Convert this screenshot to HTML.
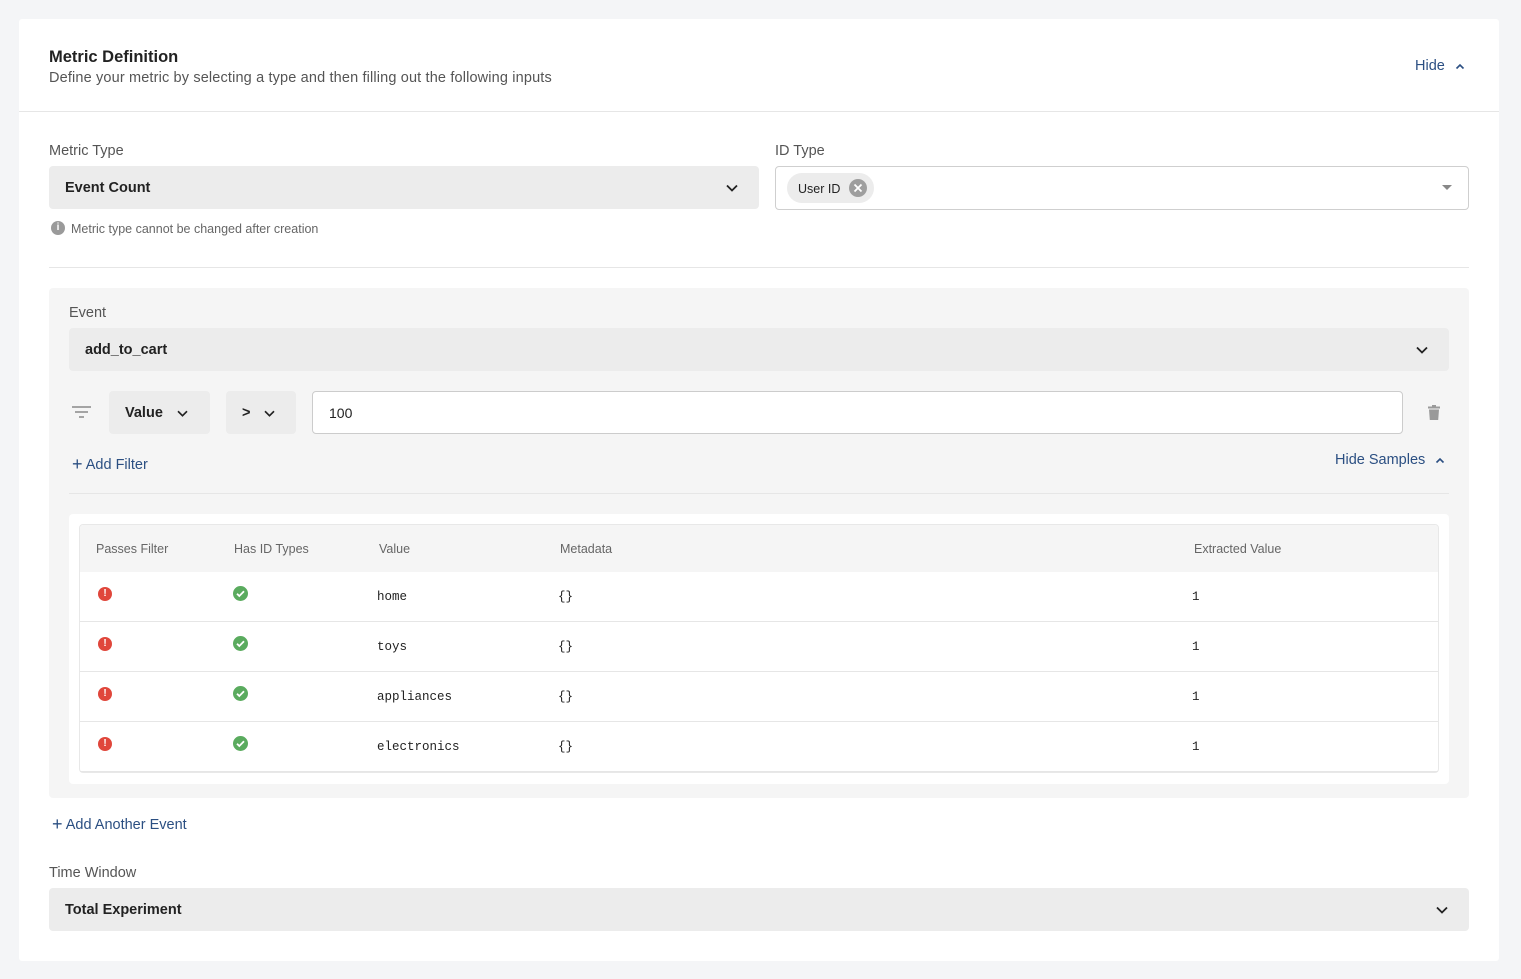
<!DOCTYPE html>
<html><head><style>
*{box-sizing:border-box;margin:0;padding:0}
body{width:1521px;height:979px;background:#f4f5f7;font-family:"Liberation Sans",sans-serif;color:#222;position:relative;overflow:hidden}
.a{position:absolute}
.card{left:19px;top:19px;width:1480px;height:942px;background:#fff;border-radius:3px}
.sel{background:#ececec;border-radius:4px;font-weight:bold;font-size:14.5px;display:flex;align-items:center;padding-left:16px;padding-top:1px}
.lbl{font-size:14.5px;color:#555}
.blue{color:#2b4f82;font-size:14.5px}
.chev{position:absolute;right:20px;top:50%;margin-top:-5px}
.th{font-size:12.5px;color:#666;top:542px}
.mono{font-family:"Liberation Mono",monospace;font-size:12.5px;color:#222}
.hr{height:1px;background:#e6e6e6}
</style></head><body>
<div class="a card"></div>
<div class="a" style="left:49px;top:48px;font-size:16.5px;font-weight:bold">Metric Definition</div>
<div class="a" style="left:49px;top:70px;font-size:14.5px;color:#555;letter-spacing:.15px">Define your metric by selecting a type and then filling out the following inputs</div>
<div class="a blue" style="left:1415px;top:58px">Hide <svg width="10" height="7" style="margin-left:6px" viewBox="0 0 10 7"><path d="M1.5 5.5L5 2l3.5 3.5" stroke="#2b4f82" stroke-width="1.6" fill="none"/></svg></div>
<div class="a hr" style="left:19px;top:111px;width:1480px"></div>

<div class="a lbl" style="left:49px;top:143px">Metric Type</div>
<div class="a sel" style="left:49px;top:166px;width:710px;height:43px">Event Count<svg class="chev" width="14" height="10" viewBox="0 0 14 10"><path d="M2 2.5l5 5 5-5" stroke="#222" stroke-width="1.8" fill="none"/></svg></div>
<div class="a" style="left:51px;top:221px;width:14px;height:14px;border-radius:50%;background:#9a9a9a;color:#fff;font-size:10px;font-weight:bold;text-align:center;line-height:14px">i</div>
<div class="a" style="left:71px;top:222px;font-size:12.5px;color:#666">Metric type cannot be changed after creation</div>

<div class="a lbl" style="left:775px;top:143px">ID Type</div>
<div class="a" style="left:775px;top:166px;width:694px;height:44px;border:1px solid #cfcfcf;border-radius:4px;background:#fff"></div>
<div class="a" style="left:787px;top:173px;width:87px;height:30px;border-radius:15px;background:#ececec;font-size:12.5px;padding:9px 0 0 11px">User ID</div>
<div class="a" style="left:849px;top:179px;width:18px;height:18px;border-radius:50%;background:#9e9e9e"><svg width="18" height="18" viewBox="0 0 18 18"><path d="M5.5 5.5l7 7M12.5 5.5l-7 7" stroke="#fff" stroke-width="1.8"/></svg></div>
<svg class="a" style="left:1442px;top:185px" width="10" height="6" viewBox="0 0 10 6"><path d="M0 0h10L5 5z" fill="#888"/></svg>

<div class="a hr" style="left:49px;top:267px;width:1420px"></div>

<div class="a" style="left:49px;top:288px;width:1420px;height:510px;background:#f5f5f5;border-radius:4px"></div>
<div class="a lbl" style="left:69px;top:305px">Event</div>
<div class="a sel" style="left:69px;top:328px;width:1380px;height:43px">add_to_cart<svg class="chev" width="14" height="10" viewBox="0 0 14 10"><path d="M2 2.5l5 5 5-5" stroke="#222" stroke-width="1.8" fill="none"/></svg></div>

<svg class="a" style="left:72px;top:405px" width="19" height="14" viewBox="0 0 19 14"><path d="M0 2h19M3 7h13M7 12h5" stroke="#999" stroke-width="1.8"/></svg>
<div class="a sel" style="left:109px;top:391px;width:101px;height:43px">Value<svg style="margin-left:13px" width="13" height="9" viewBox="0 0 14 10"><path d="M2 2.5l5 5 5-5" stroke="#222" stroke-width="1.8" fill="none"/></svg></div>
<div class="a sel" style="left:226px;top:391px;width:70px;height:43px">&gt;<svg style="margin-left:13px" width="13" height="9" viewBox="0 0 14 10"><path d="M2 2.5l5 5 5-5" stroke="#222" stroke-width="1.8" fill="none"/></svg></div>
<div class="a" style="left:312px;top:391px;width:1091px;height:43px;background:#fff;border:1px solid #ccc;border-radius:4px;font-size:14px;padding:13px 0 0 16px">100</div>
<svg class="a" style="left:1428px;top:405px" width="12" height="15" viewBox="0 0 12 15"><path d="M4 0h4v1.5h4v2H0v-2h4z M1 4.5h10l-.8 10.5H1.8z" fill="#9a9a9a"/></svg>

<div class="a blue" style="left:72px;top:453px"><span style="font-size:18px;position:relative;top:1px">+</span> Add Filter</div>
<div class="a blue" style="left:1335px;top:452px">Hide Samples <svg width="10" height="7" style="margin-left:6px" viewBox="0 0 10 7"><path d="M1.5 5.5L5 2l3.5 3.5" stroke="#2b4f82" stroke-width="1.6" fill="none"/></svg></div>
<div class="a hr" style="left:69px;top:493px;width:1380px"></div>

<div class="a" style="left:69px;top:514px;width:1380px;height:270px;background:#fff;border-radius:4px"></div>
<div class="a" style="left:79px;top:524px;width:1360px;height:249px;border:1px solid #e8e8e8;border-radius:4px;overflow:hidden">
<div style="height:47px;background:#f5f5f5"></div>
</div>
<div class="a th" style="left:96px">Passes Filter</div>
<div class="a th" style="left:234px">Has ID Types</div>
<div class="a th" style="left:379px">Value</div>
<div class="a th" style="left:560px">Metadata</div>
<div class="a th" style="left:1194px">Extracted Value</div>

<div class="a hr" style="left:80px;top:621px;width:1358px"></div>
<div class="a hr" style="left:80px;top:671px;width:1358px"></div>
<div class="a hr" style="left:80px;top:721px;width:1358px"></div>
<div class="a hr" style="left:80px;top:771px;width:1358px"></div>

<div class="a" style="left:98px;top:587px;width:14px;height:14px;border-radius:50%;background:#e0463b;color:#fff;font-size:10px;font-weight:bold;text-align:center;line-height:14px">!</div>
<div class="a" style="left:233px;top:586px;width:15px;height:15px;border-radius:50%;background:#5aab5e"><svg width="15" height="15" viewBox="0 0 15 15"><path d="M4 7.7l2.3 2.3L11 5.3" stroke="#fff" stroke-width="1.8" fill="none"/></svg></div>
<div class="a mono" style="left:377px;top:590px">home</div><div class="a mono" style="left:558px;top:590px">{}</div><div class="a mono" style="left:1192px;top:590px">1</div>

<div class="a" style="left:98px;top:637px;width:14px;height:14px;border-radius:50%;background:#e0463b;color:#fff;font-size:10px;font-weight:bold;text-align:center;line-height:14px">!</div>
<div class="a" style="left:233px;top:636px;width:15px;height:15px;border-radius:50%;background:#5aab5e"><svg width="15" height="15" viewBox="0 0 15 15"><path d="M4 7.7l2.3 2.3L11 5.3" stroke="#fff" stroke-width="1.8" fill="none"/></svg></div>
<div class="a mono" style="left:377px;top:640px">toys</div><div class="a mono" style="left:558px;top:640px">{}</div><div class="a mono" style="left:1192px;top:640px">1</div>

<div class="a" style="left:98px;top:687px;width:14px;height:14px;border-radius:50%;background:#e0463b;color:#fff;font-size:10px;font-weight:bold;text-align:center;line-height:14px">!</div>
<div class="a" style="left:233px;top:686px;width:15px;height:15px;border-radius:50%;background:#5aab5e"><svg width="15" height="15" viewBox="0 0 15 15"><path d="M4 7.7l2.3 2.3L11 5.3" stroke="#fff" stroke-width="1.8" fill="none"/></svg></div>
<div class="a mono" style="left:377px;top:690px">appliances</div><div class="a mono" style="left:558px;top:690px">{}</div><div class="a mono" style="left:1192px;top:690px">1</div>

<div class="a" style="left:98px;top:737px;width:14px;height:14px;border-radius:50%;background:#e0463b;color:#fff;font-size:10px;font-weight:bold;text-align:center;line-height:14px">!</div>
<div class="a" style="left:233px;top:736px;width:15px;height:15px;border-radius:50%;background:#5aab5e"><svg width="15" height="15" viewBox="0 0 15 15"><path d="M4 7.7l2.3 2.3L11 5.3" stroke="#fff" stroke-width="1.8" fill="none"/></svg></div>
<div class="a mono" style="left:377px;top:740px">electronics</div><div class="a mono" style="left:558px;top:740px">{}</div><div class="a mono" style="left:1192px;top:740px">1</div>

<div class="a blue" style="left:52px;top:813px"><span style="font-size:18px;position:relative;top:1px">+</span> Add Another Event</div>

<div class="a lbl" style="left:49px;top:865px">Time Window</div>
<div class="a sel" style="left:49px;top:888px;width:1420px;height:43px">Total Experiment<svg class="chev" width="14" height="10" viewBox="0 0 14 10"><path d="M2 2.5l5 5 5-5" stroke="#222" stroke-width="1.8" fill="none"/></svg></div>
</body></html>
